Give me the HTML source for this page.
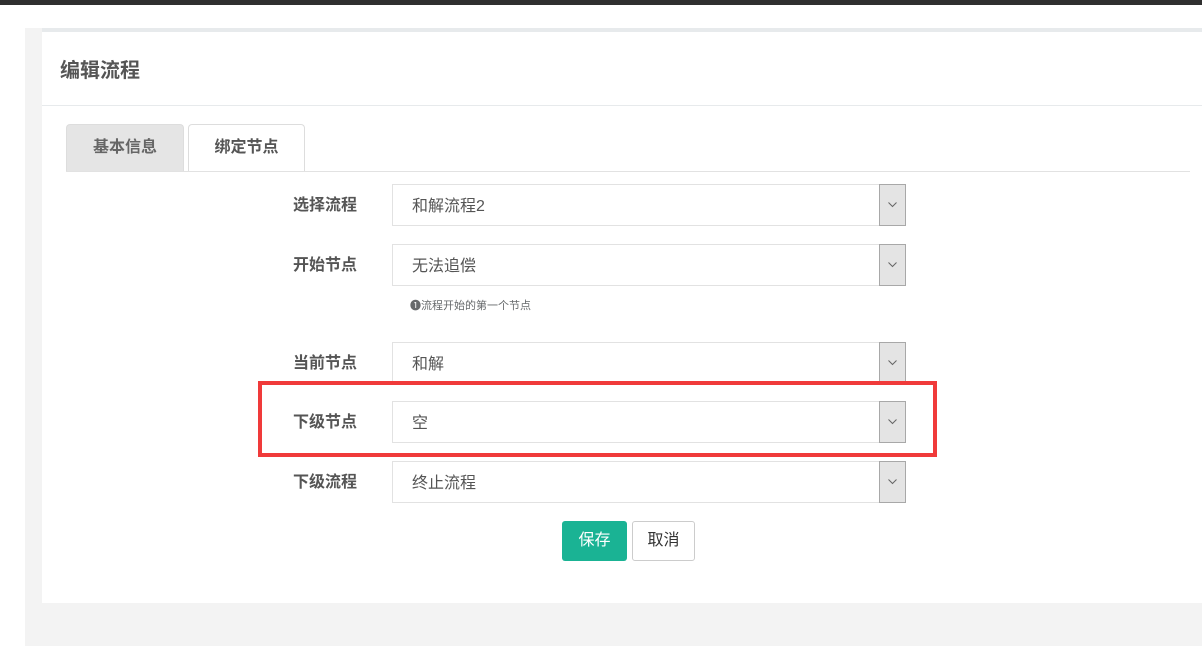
<!DOCTYPE html>
<html><head><meta charset="utf-8"><style>
*{box-sizing:border-box;margin:0;padding:0}
body{width:1202px;height:646px;position:relative;background:#fff;font-family:"Liberation Sans","Noto Sans CJK SC",sans-serif;overflow:hidden}
.a{position:absolute}
.lbl{position:absolute;left:260px;width:97px;text-align:right;font-weight:bold;font-size:16px;color:#555}
.sel{position:absolute;left:392px;width:514px;height:42px;border:1px solid #e2e2e2;font-size:16px;color:#555;padding:7px 0 0 19px}
.sel .ar{position:absolute;right:-1px;top:-1px;width:27px;height:42px;background:#e4e4e4;border:1px solid #a8a8a8}
.sel .ar svg{position:absolute;left:8px;top:17px}
</style></head><body>
<div class="a" style="left:0;top:0;width:1202px;height:5px;background:#2f2f2f"></div>
<div class="a" style="left:25px;top:28px;width:1177px;height:618px;background:#f3f3f3"></div>
<div class="a" style="left:42px;top:28px;width:1160px;height:575px;background:#fff;border-top:4px solid #e7eaec"></div>
<div class="a" style="left:60px;top:54px;font-size:20px;font-weight:bold;color:#555">编辑流程</div>
<div class="a" style="left:42px;top:105px;width:1160px;height:1px;background:#e7eaec"></div>
<div class="a" style="left:66px;top:124px;width:118px;height:48px;background:#e5e5e5;border:1px solid #ddd;border-bottom:none;border-radius:4px 4px 0 0;font-size:16px;font-weight:bold;color:#666;text-align:center;line-height:46px">基本信息</div>
<div class="a" style="left:188px;top:124px;width:117px;height:48px;background:#fff;border:1px solid #ddd;border-bottom:none;border-radius:4px 4px 0 0;font-size:16px;font-weight:bold;color:#555;text-align:center;line-height:46px">绑定节点</div>
<div class="a" style="left:66px;top:171px;width:1124px;height:1px;background:#e2e2e2"></div>

<div class="lbl" style="top:191px">选择流程</div>
<div class="sel" style="top:184px">和解流程2<div class="ar"><svg width="9" height="6"><path d="M0.5 0.5L4.5 4.5L8.5 0.5" fill="none" stroke="#666" stroke-width="1"/></svg></div></div>
<div class="lbl" style="top:251px">开始节点</div>
<div class="sel" style="top:244px">无法追偿<div class="ar"><svg width="9" height="6"><path d="M0.5 0.5L4.5 4.5L8.5 0.5" fill="none" stroke="#666" stroke-width="1"/></svg></div></div>
<div class="a" style="left:410px;top:297px;font-size:11px;color:#676a6c">❶流程开始的第一个节点</div>
<div class="lbl" style="top:349px">当前节点</div>
<div class="sel" style="top:342px">和解<div class="ar"><svg width="9" height="6"><path d="M0.5 0.5L4.5 4.5L8.5 0.5" fill="none" stroke="#666" stroke-width="1"/></svg></div></div>
<div class="lbl" style="top:408px">下级节点</div>
<div class="sel" style="top:401px">空<div class="ar"><svg width="9" height="6"><path d="M0.5 0.5L4.5 4.5L8.5 0.5" fill="none" stroke="#666" stroke-width="1"/></svg></div></div>
<div class="lbl" style="top:468px">下级流程</div>
<div class="sel" style="top:461px">终止流程<div class="ar"><svg width="9" height="6"><path d="M0.5 0.5L4.5 4.5L8.5 0.5" fill="none" stroke="#666" stroke-width="1"/></svg></div></div>
<div class="a" style="left:258px;top:381px;width:679px;height:76px;border:4px solid #f03a3a"></div>

<div class="a" style="left:562px;top:521px;width:65px;height:40px;background:#1ab394;border-radius:3px;color:#fff;font-size:16px;text-align:center;line-height:40px">保存</div>
<div class="a" style="left:632px;top:521px;width:63px;height:40px;background:#fff;border:1px solid #ccc;border-radius:3px;color:#333;font-size:16px;text-align:center;line-height:38px">取消</div>
</body></html>
